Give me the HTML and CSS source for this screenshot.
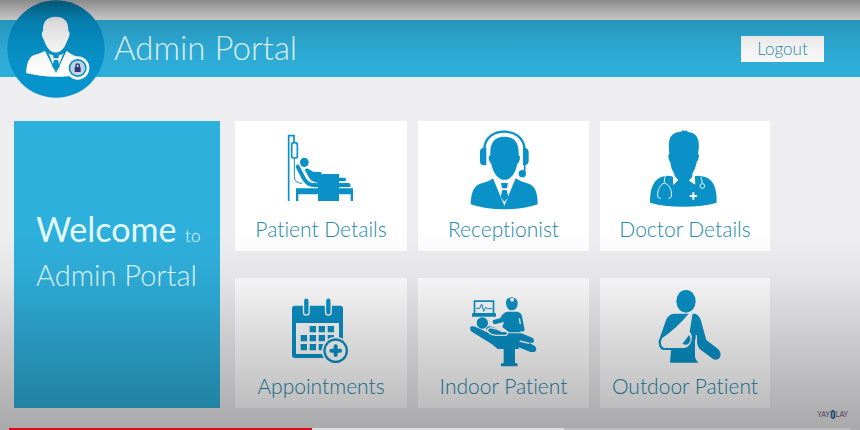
FILE: index.html
```html
<!DOCTYPE html>
<html lang="en">
<head>
<meta charset="utf-8">
<title>Admin Portal</title>
<link rel="stylesheet" href="styles.css">
</head>
<body>
<div class="page">
  <header class="topbar">
    <svg class="avatar" viewBox="0 0 294 294" aria-hidden="true">
      <circle class="disc" cx="147" cy="147" r="146"/>
      <path class="light" d="M146 50C120 50 107 64 108 92Q102 99 106 110L112 124Q119 144 131 153Q146 162 161 153Q174 143 180 124L186 110Q190 98 184 92C185 63 171 50 146 50Z"/>
      <path class="light" d="M114 152Q107 158 80 165Q59 174 57 219Q99 230 146 230Q190 230 207 224L210 170Q190 162 178 152L147 218Z"/>
      <path class="disc" d="M113 148L147 219L180 148L170 158Q146 170 123 158Z"/>
      <path class="light" d="M124 158L147 215L170 158L164 164H130Z"/>
      <path class="disc" d="M137 163H157L154 175H140ZM141 180H153L158 200L147 213L136 200Z"/>
      <circle class="light" cx="212" cy="204" r="35"/>
      <circle class="disc" cx="212" cy="204" r="27"/>
      <circle class="seal" cx="212" cy="204" r="22"/>
      <path class="shackle" d="M207 202V197Q207 192 212 192Q217 192 217 197V202"/>
      <path class="lock" d="M203 201H221V216H203Z"/>
    </svg>
    <h1 class="title">Admin Portal</h1>
    <button class="logout" type="button">Logout</button>
  </header>

  <main class="content">
    <section class="welcome">
      <p class="hello">Welcome <small>to</small></p>
      <p class="portal">Admin Portal</p>
    </section>

    <nav class="cards" aria-label="Sections">
      <a class="card" href="#patients">
        <svg class="icon" viewBox="165 45 216 240" aria-hidden="true">
          <path class="line" d="M176 258V62H192V82"/>
          <rect class="line" x="185" y="83" width="17" height="46" rx="7"/>
          <path class="hair" d="M193 129V184Q193 204 216 205"/>
          <ellipse cx="223" cy="142" rx="13" ry="14"/>
          <path class="limb" d="M203 155L220 188Q229 205 243 209L265 211"/>
          <path d="M224 164Q231 157 239 164L249 170L272 171Q279 175 272 180L264 182L279 177H327V258H264V238H205V258H198V220H264V204Q246 201 238 190Z"/>
          <path d="M326 188H346Q351 193 346 199H326ZM326 204H357Q365 210 360 216H326ZM326 220H369V258H362V238H326Z"/>
        </svg>
        <span>Patient Details</span>
      </a>
      <a class="card" href="#reception">
        <svg class="icon" viewBox="157 45 216 240" aria-hidden="true">
          <path d="M266 65C237 65 222 82 224 121Q217 122 220 135Q223 142 227 147Q234 181 253 191Q266 198 280 191Q298 181 305 147Q310 143 312 134Q315 122 309 121C311 82 296 65 266 65Z"/>
          <path class="band" d="M206 101C208 67 235 50 266 50S323 67 327 101"/>
          <path d="M203 98H212V151H202Q193 148 193 140V109Q194 100 203 98ZM322 98H329Q338 101 339 110V140Q337 149 329 151H322Z"/>
          <path class="wire" d="M327 145V165Q327 173 320 176"/>
          <circle cx="320" cy="176" r="11"/>
          <path d="M232 190L266 272L300 190Q313 199 341 207Q366 216 366 268Q325 283 266 283T165 268Q166 217 192 207Q222 199 232 190Z"/>
          <path class="cut" d="M233 188L266 267L299 188Q289 197 277 200H254Q242 197 233 188Z"/>
          <path d="M256 204H277L274 220H259ZM260 225H273L278 246L266 261L255 246Z"/>
        </svg>
        <span>Receptionist</span>
      </a>
      <a class="card" href="#doctors">
        <svg class="icon" viewBox="162 45 216 240" aria-hidden="true">
          <path d="M223 118Q219 80 226 67Q235 51 257 51L265 45L269 49L276 46L278 51Q301 53 307 68Q315 83 309 117Q315 118 309 135L305 142Q300 165 292 176V189Q302 178 327 185Q367 194 365 263Q326 275 265 275T165 263Q164 197 201 185Q227 178 238 189V176Q228 163 226 142L222 135Q217 119 223 118Z"/>
          <path class="cut" d="M234 177L250 195L234 211ZM299 177L282 197L301 209Z"/>
          <path class="scope" d="M212 182Q207 188 208 203M197 250L190 248C184 236 191 211 208 204C227 210 234 236 227 248L221 250M318 185L322 204"/>
          <circle class="scope" cx="322" cy="213" r="7"/>
          <path class="cross" d="M295 232V254M284 243H306"/>
        </svg>
        <span>Doctor Details</span>
      </a>
      <a class="card" href="#appointments">
        <svg class="icon" viewBox="165 45 216 240" aria-hidden="true">
          <path fill-rule="evenodd" d="M194 101H331Q339 101 339 109V250Q339 258 331 258H194Q186 258 186 250V109Q186 101 194 101ZM198 153V246H327V153Z"/>
          <path d="M239 162H258V181H239ZM266 162H285V181H266ZM293 162H312V181H293ZM212 189H231V208H212ZM239 189H258V208H239ZM266 189H285V208H266ZM293 189H312V208H293ZM212 216H231V235H212ZM239 216H258V235H239ZM266 216H285V235H266Z"/>
          <path class="ring-cut" d="M229 86V121M295 86V121"/>
          <path class="ring" d="M229 86V121M295 86V121"/>
          <circle class="cut" cx="317" cy="236" r="42"/>
          <circle cx="317" cy="236" r="37"/>
          <circle class="cut" cx="317" cy="236" r="30"/>
          <path class="plus" d="M317 223V249M304 236H330"/>
        </svg>
        <span>Appointments</span>
      </a>
      <a class="card" href="#indoor">
        <svg class="icon" viewBox="150 45 216 240" aria-hidden="true">
          <path fill-rule="evenodd" d="M167 85H229V124H234V134H162V124H167ZM172 90V123H224V90Z"/>
          <path class="hair" d="M174 109H185L191 96L197 118L203 106L208 110H222"/>
          <circle cx="193" cy="153" r="17"/>
          <path d="M264 91Q264 80 274 78Q281 74 289 78Q299 82 299 93Q299 115 282 115Q264 114 264 91ZM267 119H297Q308 120 312 132L320 174Q317 180 308 178L304 181H273L253 165L258 150L230 157Q221 153 225 145L247 138Q255 121 267 119Z"/>
          <path class="cut" d="M277 79H288V84Q287 89 282 89Q277 89 277 84Z"/>
          <path d="M156 166Q163 160 172 164L220 187L205 174Q203 164 215 162L233 168Q242 176 263 179L273 184H310L343 197Q352 204 345 212L334 212L350 222Q360 231 350 240L337 240L302 226V231H291V274H297Q300 278 298 283H250Q247 278 250 274H257V231H239L222 217L158 177Z"/>
          <path class="outline" d="M219 167Q202 170 212 181Q220 191 243 190H263Q273 185 266 179Q249 180 235 171Z"/>
          <path class="outline" d="M305 207L334 214M304 139L307 156"/>
        </svg>
        <span>Indoor Patient</span>
      </a>
      <a class="card" href="#outdoor">
        <svg class="icon" viewBox="166 45 216 240" aria-hidden="true">
          <ellipse cx="277" cy="88" rx="29" ry="34"/>
          <path d="M241 125H305Q317 129 322 146L338 204L374 232Q386 245 377 259Q368 267 357 260L318 231Q310 222 308 196L304 207V255Q305 264 315 272H229L232 234H207Q194 228 195 207L218 142Q225 127 241 125Z"/>
          <path class="cut" d="M287 123H297L288 179Q301 192 289 217Q284 226 272 228H211Q200 222 202 208L205 199Q250 168 287 123Z"/>
          <path d="M286 189Q295 202 286 214Q282 221 266 216Z"/>
          <path class="outline" d="M308 190V225"/>
        </svg>
        <span>Outdoor Patient</span>
      </a>
    </nav>
  </main>

  <footer class="brand">
    <span>YAY</span>
    <svg viewBox="0 0 18 30" aria-hidden="true"><path d="M2 5L10 1L16 6V25L9 29L2 24Z"/><path class="pane" d="M6 9L12 7V22L6 24Z"/></svg>
    <span>LAY</span>
  </footer>
  <div class="seek" role="progressbar" aria-label="Playback" aria-valuenow="36"><div class="loaded"></div><div class="played"></div></div>
</div>
</body>
</html>
```
FILE: styles.css
```css
* { box-sizing: border-box; }

body {
  margin: 0;
  background: #eeeef0;
  font-family: Lato, "Open Sans", sans-serif;
  font-weight: 300;
  font-variant-ligatures: none;
}

.page {
  position: relative;
  display: flex;
  flex-direction: column;
  min-height: 100vh;
  padding-top: 20px;
  overflow: hidden;
}

/* Player shading over the whole page */
.page::after {
  content: "";
  position: absolute;
  inset: 0;
  pointer-events: none;
  background: linear-gradient(rgba(0, 0, 0, .42), rgba(0, 0, 0, .15) 5%, rgba(0, 0, 0, .05) 11%, transparent 18%, transparent 54%, rgba(0, 0, 0, .04) 64%, rgba(0, 0, 0, .14) 78%, rgba(0, 0, 0, .24) 92%, rgba(0, 0, 0, .29));
}

.topbar {
  display: flex;
  align-items: center;
  height: 57px;
  padding: 0 36px 0 7px;
  background: #2eb0dc;
}

.avatar {
  flex: none;
  width: 98px;
  height: 98px;
}

.disc { fill: #0694cc; }
.light { fill: #fff; }
.seal { fill: #c5d5e5; }
.lock { fill: #293b79; }
.shackle { fill: none; stroke: #293b79; stroke-width: 4; }

.title {
  margin: 0 auto 0 9px;
  padding-bottom: 4px;
  color: #e3fbff;
  font-size: 33px;
  font-weight: 300;
  line-height: 40px;
}

.logout {
  width: 83px;
  height: 26px;
  padding: 0;
  border: 0;
  background: #fff;
  color: #2a90b0;
  font: inherit;
  font-size: 17px;
}

.content {
  display: grid;
  grid-template-columns: 206fr 535fr;
  gap: 15px;
  padding: 44px 90px 0 14px;
}

.welcome {
  padding: 87px 0 0 22px;
  background: #2eb0dc;
  color: #e3fbff;
}

.welcome p { margin: 0; white-space: nowrap; }
.hello { font-size: 34px; font-weight: 400; line-height: 42px; }
.hello small { font-size: 17px; font-weight: 300; }
.portal { font-size: 29px; line-height: 36px; }

.cards {
  display: grid;
  grid-template-columns: 172fr 171fr 170fr;
  gap: 27px 11px;
}

.card {
  display: flex;
  flex-direction: column;
  align-items: center;
  padding: 9px 0 3px;
  background: #fff;
  color: #2388b0;
  font-size: 21px;
  line-height: 38px;
  text-decoration: none;
  white-space: nowrap;
}

.icon {
  width: 72px;
  height: 80px;
  fill: #0a92c8;
}

.icon .cut { fill: #fff; }
.line, .hair, .limb, .band, .wire { fill: none; stroke: #0a92c8; }
.line { stroke-width: 5; }
.hair { stroke-width: 3; }
.limb { stroke-width: 12; stroke-linecap: round; }
.band { stroke-width: 7; }
.wire { stroke-width: 5; }
.scope { fill: none; stroke: #e5f9ff; stroke-width: 3; }
.cross { stroke: #fff; stroke-width: 6; }
.ring { stroke: #0a92c8; stroke-width: 13; stroke-linecap: round; }
.ring-cut { stroke: #fff; stroke-width: 21; stroke-linecap: round; }
.plus { stroke: #0a92c8; stroke-width: 12; stroke-linecap: round; }
.outline { fill: none; stroke: #fff; stroke-width: 4; }

.brand {
  display: flex;
  align-items: center;
  justify-content: flex-end;
  height: 12px;
  padding-right: 12px;
  color: #76507f;
  font-size: 7px;
  font-weight: 400;
}

.brand svg { width: 6px; height: 11px; fill: #34619d; }
.brand .pane { fill: #8eb5de; }

.seek {
  position: absolute;
  z-index: 1;
  right: 10px;
  bottom: 0;
  left: 9px;
  height: 2px;
  background: #bdbdbf;
}

.loaded, .played { position: absolute; top: 0; left: 0; height: 100%; }
.loaded { width: 66%; background: #dededf; }
.played { width: 36%; background: #d60b1d; }
```
